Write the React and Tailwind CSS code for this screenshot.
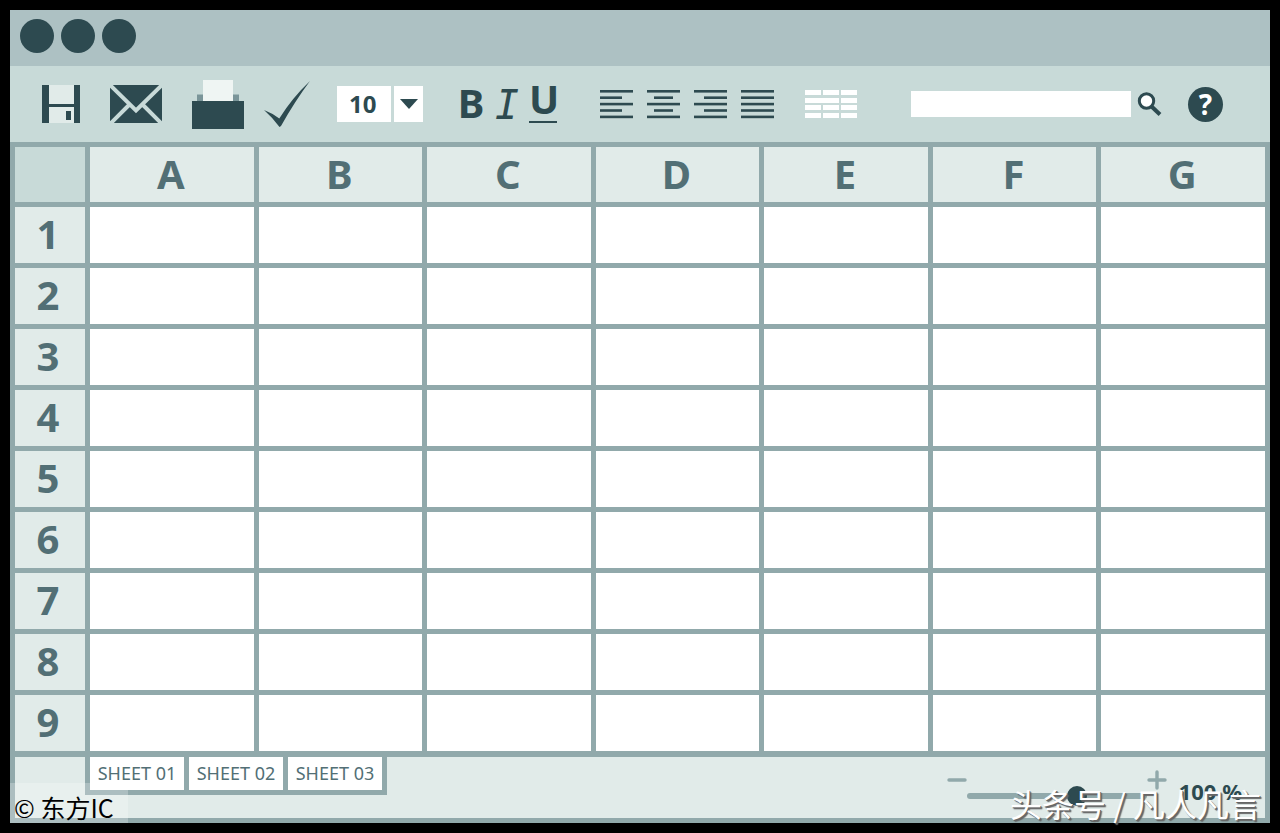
import React, { useState } from 'react';

const COLUMNS = ['A', 'B', 'C', 'D', 'E', 'F', 'G'];
const ROWS = [1, 2, 3, 4, 5, 6, 7, 8, 9];
const SHEETS = ['SHEET 01', 'SHEET 02', 'SHEET 03'];

// Each entry is the list of [x, width] for the five lines of the icon
const ALIGNMENTS = [
  { name: 'Align left', lines: [[0, 33], [0, 22], [0, 33], [0, 22], [0, 33]] },
  { name: 'Align center', lines: [[0, 33], [7, 19], [0, 33], [7, 19], [0, 33]] },
  { name: 'Align right', lines: [[0, 33], [10, 23], [0, 33], [10, 23], [0, 33]] },
  { name: 'Justify', lines: [[0, 33], [0, 33], [0, 33], [0, 33], [0, 33]] },
];

function SaveIcon() {
  return (
    <svg width="38" height="38" viewBox="0 0 38 38">
      <path fill="#2d4a50" d="M0 0h38v38H0z" />
      <path fill="#e1ebe9" d="M7 0h25v19H7zM7 22h25v16H7z" />
      <path fill="#2d4a50" d="M24 26h5v9h-5z" />
    </svg>
  );
}

function MailIcon() {
  return (
    <svg width="52" height="38" viewBox="0 0 52 38">
      <path fill="#2d4a50" d="M0 0h52v38H0z" />
      <path fill="none" stroke="#c8dad8" strokeWidth="4" d="M0 0L26 25.5L52 0M0 39L19 20M52 39L33 20" />
    </svg>
  );
}

function PrintIcon() {
  return (
    <svg width="52" height="49" viewBox="0 0 52 49">
      <path fill="#7a9599" d="M5 14.5h6V21H5zM41 14.5h6V21h-6z" />
      <path fill="#eff5f3" d="M11 0h30v21H11z" />
      <path fill="#2d4a50" d="M0 21h52v28H0z" />
    </svg>
  );
}

function CheckIcon() {
  return (
    <svg width="46" height="46" viewBox="0 0 46 46">
      <path fill="#2d4a50" d="M0 29Q8 32 15.3 37.5Q28 17 46 0Q31 20 17 45L15.5 46Q8 36 0 29z" />
    </svg>
  );
}

function AlignIcon({ lines }) {
  return (
    <svg width="33" height="29" viewBox="0 0 33 29" fill="#2d4a50">
      {lines.map(([x, width], i) => (
        <rect key={i} x={x} y={i * 6.4} width={width} height="2.6" />
      ))}
    </svg>
  );
}

function TableIcon() {
  return (
    <svg width="52" height="28" viewBox="0 0 52 28" fill="#fff">
      <path d="M0 0h16v5H0zM18 0h16v5H18zM36 0h16v5H36z" />
      <path d="M0 8h34v5H0zM36 8h16v5H36z" />
      <path d="M0 15h16v5H0zM18 15h16v5H18zM36 15h16v5H36z" />
      <path d="M0 23h16v5H0zM18 23h16v5H18zM36 23h16v5H36z" />
    </svg>
  );
}

function SearchIcon() {
  return (
    <svg width="25" height="24" viewBox="0 0 25 24">
      <path stroke="#2d4a50" strokeWidth="4" d="M13.5 13.5L23 22.5" />
      <circle cx="9.5" cy="9" r="7.2" fill="#fff" stroke="#2d4a50" strokeWidth="3" />
    </svg>
  );
}

function Toolbar({ fontSize, onFontSize }) {
  return (
    <div className="flex h-[76px] items-center bg-[#c8dad8] pr-[47px] pl-8">
      <div className="flex shrink-0 items-center gap-[30px]">
        <button aria-label="Save"><SaveIcon /></button>
        <button aria-label="Mail"><MailIcon /></button>
        <button aria-label="Print"><PrintIcon /></button>
      </div>
      <button aria-label="Spelling" className="ml-5 shrink-0"><CheckIcon /></button>

      {/* Font size */}
      <div className="relative ml-[27px] h-9 w-[86px] shrink-0">
        <select
          aria-label="Font size"
          value={fontSize}
          onChange={(e) => onFontSize(e.target.value)}
          className="h-9 w-full appearance-none bg-white pl-3 text-2xl leading-9 font-bold text-[#2d4a50]"
        >
          <option>8</option>
          <option>10</option>
          <option>12</option>
          <option>14</option>
        </select>
        <span className="pointer-events-none absolute inset-y-0 right-0 flex w-8 items-center justify-center border-l-[3px] border-[#c8dad8]">
          <svg width="18" height="10" viewBox="0 0 18 10" fill="#2d4a50">
            <path d="M0 0h18L9 10z" />
          </svg>
        </span>
      </div>

      {/* Text style */}
      <div className="ml-[34px] flex h-[38px] shrink-0 items-start gap-2 text-[40px] leading-7">
        <button aria-label="Bold" className="w-7 pt-1 font-bold">B</button>
        <button aria-label="Italic" className="w-7 pt-1.5 font-['DejaVu_Sans_Mono',monospace] italic">I</button>
        <button aria-label="Underline" className="h-[38px] w-7 border-b-2 border-[#2d4a50] pb-2 font-bold">U</button>
      </div>

      <div className="ml-[43px] flex shrink-0 items-center gap-[14px]">
        {ALIGNMENTS.map((a) => (
          <button key={a.name} aria-label={a.name}><AlignIcon lines={a.lines} /></button>
        ))}
      </div>
      <button aria-label="Insert table" className="ml-[31px] shrink-0"><TableIcon /></button>

      {/* Search */}
      <div className="ml-[54px] flex min-w-0 flex-1 items-center gap-[6px]">
        <input type="text" aria-label="Search" className="h-[26px] min-w-0 flex-1 bg-white px-2 text-lg" />
        <button aria-label="Run search" className="shrink-0"><SearchIcon /></button>
      </div>
      <button aria-label="Help" className="ml-[26px] flex size-[35px] shrink-0 items-center justify-center rounded-full bg-[#2d4a50] text-[28px] leading-7 font-bold text-white">
        ?
      </button>
    </div>
  );
}

function Grid() {
  return (
    <table className="w-full table-fixed border-separate border-spacing-[5px] bg-[#91a9ab] text-[40px] leading-10 text-[#526f75]">
      <thead>
        <tr className="h-[55px]">
          <td className="w-[70px] bg-[#c8dad8] p-0" />
          {COLUMNS.map((c) => (
            <th key={c} scope="col" className="bg-[#e1ebe9] p-0 pr-0.5 pb-0.5 font-bold">{c}</th>
          ))}
        </tr>
      </thead>
      <tbody>
        {ROWS.map((r) => (
          <tr key={r} className="h-[56px]">
            <th scope="row" className="bg-[#e1ebe9] p-0 pr-1 pb-0.5 font-bold">{r}</th>
            {COLUMNS.map((c) => (
              <td key={c} className="bg-white p-0" />
            ))}
          </tr>
        ))}
      </tbody>
    </table>
  );
}

function Footer({ zoom, onZoom }) {
  return (
    <div className="flex flex-1 items-start justify-between border-x-[5px] border-t border-b-[5px] border-[#91a9ab] bg-[#e1ebe9]">
      <div className="ml-[70px] flex gap-[5px] bg-[#91a9ab] px-[5px] pb-[5px]">
        {SHEETS.map((s) => (
          <button key={s} className="h-[33px] w-[94px] bg-white pb-0.5 text-lg leading-7 text-[#526f75]">{s}</button>
        ))}
      </div>

      <div className="mt-[13px] mr-[23px] flex items-start">
        <button aria-label="Zoom out">
          <svg width="20" height="20" viewBox="0 0 20 20" stroke="#91a9ab" strokeWidth="3.4" strokeLinecap="round">
            <path d="M2 10h16" />
          </svg>
        </button>
        <input
          type="range"
          aria-label="Zoom"
          min="0"
          max="160"
          value={zoom}
          onChange={(e) => onZoom(e.target.value)}
          className="mt-4 h-5 w-[180px] appearance-none bg-transparent [&::-webkit-slider-runnable-track]:h-[6px] [&::-webkit-slider-runnable-track]:rounded-full [&::-webkit-slider-runnable-track]:bg-[#91a9ab] [&::-webkit-slider-thumb]:-mt-[7px] [&::-webkit-slider-thumb]:size-5 [&::-webkit-slider-thumb]:appearance-none [&::-webkit-slider-thumb]:rounded-full [&::-webkit-slider-thumb]:bg-[#2d4a50]"
        />
        <button aria-label="Zoom in">
          <svg width="20" height="20" viewBox="0 0 20 20" stroke="#91a9ab" strokeWidth="3.4" strokeLinecap="round">
            <path d="M2 10h16M10 2v16" />
          </svg>
        </button>
        <span className="mt-[9px] ml-3 text-[22px] leading-6 font-bold">{zoom} %</span>
      </div>
    </div>
  );
}

export default function App() {
  const [fontSize, setFontSize] = useState('10');
  const [zoom, setZoom] = useState(100);

  return (
    <div className="flex min-h-screen flex-col bg-black p-[10px] font-['Noto_Sans','Noto_Sans_CJK_SC',sans-serif] text-[#2d4a50]">
      <main className="relative flex flex-1 flex-col">
        {/* Title bar */}
        <div className="flex h-14 items-start gap-[7px] bg-[#adc1c3] px-[10px] pt-[9px]">
          <button aria-label="Close" className="size-[34px] rounded-full bg-[#2d4a50]" />
          <button aria-label="Minimize" className="size-[34px] rounded-full bg-[#2d4a50]" />
          <button aria-label="Maximize" className="size-[34px] rounded-full bg-[#2d4a50]" />
        </div>
        <Toolbar fontSize={fontSize} onFontSize={setFontSize} />
        <Grid />
        <Footer zoom={zoom} onZoom={setZoom} />

        {/* Credits over the bottom edge */}
        <p className="absolute bottom-0 left-0 h-10 w-[118px] bg-white/25 pt-2 pl-1 font-['Noto_Sans_CJK_SC',sans-serif] text-[25px] leading-8 whitespace-nowrap text-black">
          © 东方IC
        </p>
        <p className="pointer-events-none absolute right-[9px] bottom-0.5 font-['Noto_Sans_CJK_SC',sans-serif] text-[32px] leading-9 whitespace-nowrap text-white [text-shadow:1px_1px_0_#666,2px_2px_1px_#666]">
          头条号 / 凡人凡言
        </p>
      </main>
    </div>
  );
}
